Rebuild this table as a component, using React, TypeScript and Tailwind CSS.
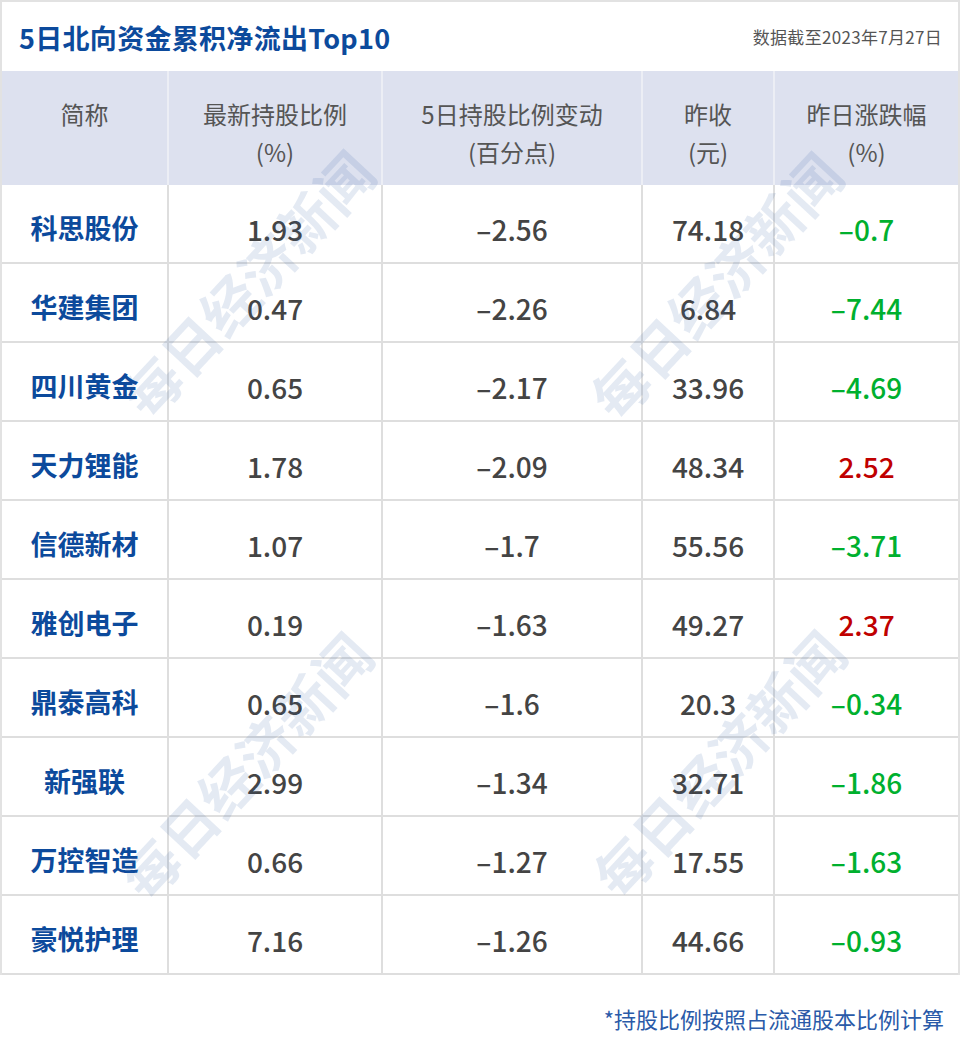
const rows = [
  { name: "科思股份", ratio: "1.93", change: "–2.56", close: "74.18", pct: "–0.7" },
  { name: "华建集团", ratio: "0.47", change: "–2.26", close: "6.84", pct: "–7.44" },
  { name: "四川黄金", ratio: "0.65", change: "–2.17", close: "33.96", pct: "–4.69" },
  { name: "天力锂能", ratio: "1.78", change: "–2.09", close: "48.34", pct: "2.52" },
  { name: "信德新材", ratio: "1.07", change: "–1.7", close: "55.56", pct: "–3.71" },
  { name: "雅创电子", ratio: "0.19", change: "–1.63", close: "49.27", pct: "2.37" },
  { name: "鼎泰高科", ratio: "0.65", change: "–1.6", close: "20.3", pct: "–0.34" },
  { name: "新强联", ratio: "2.99", change: "–1.34", close: "32.71", pct: "–1.86" },
  { name: "万控智造", ratio: "0.66", change: "–1.27", close: "17.55", pct: "–1.63" },
  { name: "豪悦护理", ratio: "7.16", change: "–1.26", close: "44.66", pct: "–0.93" },
];

const headers = [
  ["简称"],
  ["最新持股比例", "(%)"],
  ["5日持股比例变动", "(百分点)"],
  ["昨收", "(元)"],
  ["昨日涨跌幅", "(%)"],
];

// watermark copies, centred on these page points
const marks = [
  "left-[247px] top-[283px]",
  "left-[715px] top-[285px]",
  "left-[245px] top-[765px]",
  "left-[718px] top-[763px]",
];

const cell = "h-[79px] flex items-center justify-center pt-[10px] border-b-2 border-[#dedede]";

export default function App() {
  return (
    <div
      className="relative w-[960px] h-[1047px] bg-white overflow-hidden"
      style={{ fontFamily: '"Noto Sans CJK SC", "Noto Sans", sans-serif' }}
    >
      <div className="border-x-2 border-t-2 border-[#e2e2e2] w-[960px]">
        <div className="flex items-center justify-between h-[69px] pl-[17px] pr-[16px]">
          <h1 className="text-[27px] font-bold text-[#0c4a9c] pt-[3px] tracking-[0.3px]">
            5日北向资金累积净流出Top10
          </h1>
          <span className="text-[17px] text-[#555] tracking-[0.3px]">数据截至2023年7月27日</span>
        </div>

        <div className="grid grid-cols-[165px_214px_260px_132px_185px]">
          {headers.map((h, i) => (
            <div
              key={i}
              className={
                "h-[114px] bg-[#dde1ef] pt-[24px] text-center text-[24px] leading-[38px] text-[#555] " +
                (i > 0 ? "border-l-2 border-[#eceef5]" : "")
              }
            >
              {h.map((t) => (
                <div key={t}>{t}</div>
              ))}
            </div>
          ))}

          {rows.map((r) => {
            const up = !r.pct.startsWith("–");
            return [
              <div key={r.name + "0"} className={cell + " text-[27px] font-bold text-[#0c4a9c]"}>
                {r.name}
              </div>,
              <div key={r.name + "1"} className={cell + " border-l-2 text-[28px] font-medium text-[#444]"}>
                {r.ratio}
              </div>,
              <div key={r.name + "2"} className={cell + " border-l-2 text-[28px] font-medium text-[#444]"}>
                {r.change}
              </div>,
              <div key={r.name + "3"} className={cell + " border-l-2 text-[28px] font-medium text-[#444]"}>
                {r.close}
              </div>,
              <div
                key={r.name + "4"}
                className={
                  cell + " border-l-2 text-[28px] font-medium " + (up ? "text-[#c00000]" : "text-[#00b02e]")
                }
              >
                {r.pct}
              </div>,
            ];
          })}
        </div>
      </div>

      <p className="text-right pr-[16px] pt-[27px] text-[22px] text-[#2a5aa8]">
        *持股比例按照占流通股本比例计算
      </p>

      {marks.map((m) => (
        <div
          key={m}
          className={
            "absolute pointer-events-none whitespace-nowrap -translate-x-1/2 -translate-y-1/2 -rotate-[47deg] text-[56px] font-bold text-[rgba(50,90,165,0.13)] " +
            m
          }
        >
          每日经济新闻
        </div>
      ))}
    </div>
  );
}
